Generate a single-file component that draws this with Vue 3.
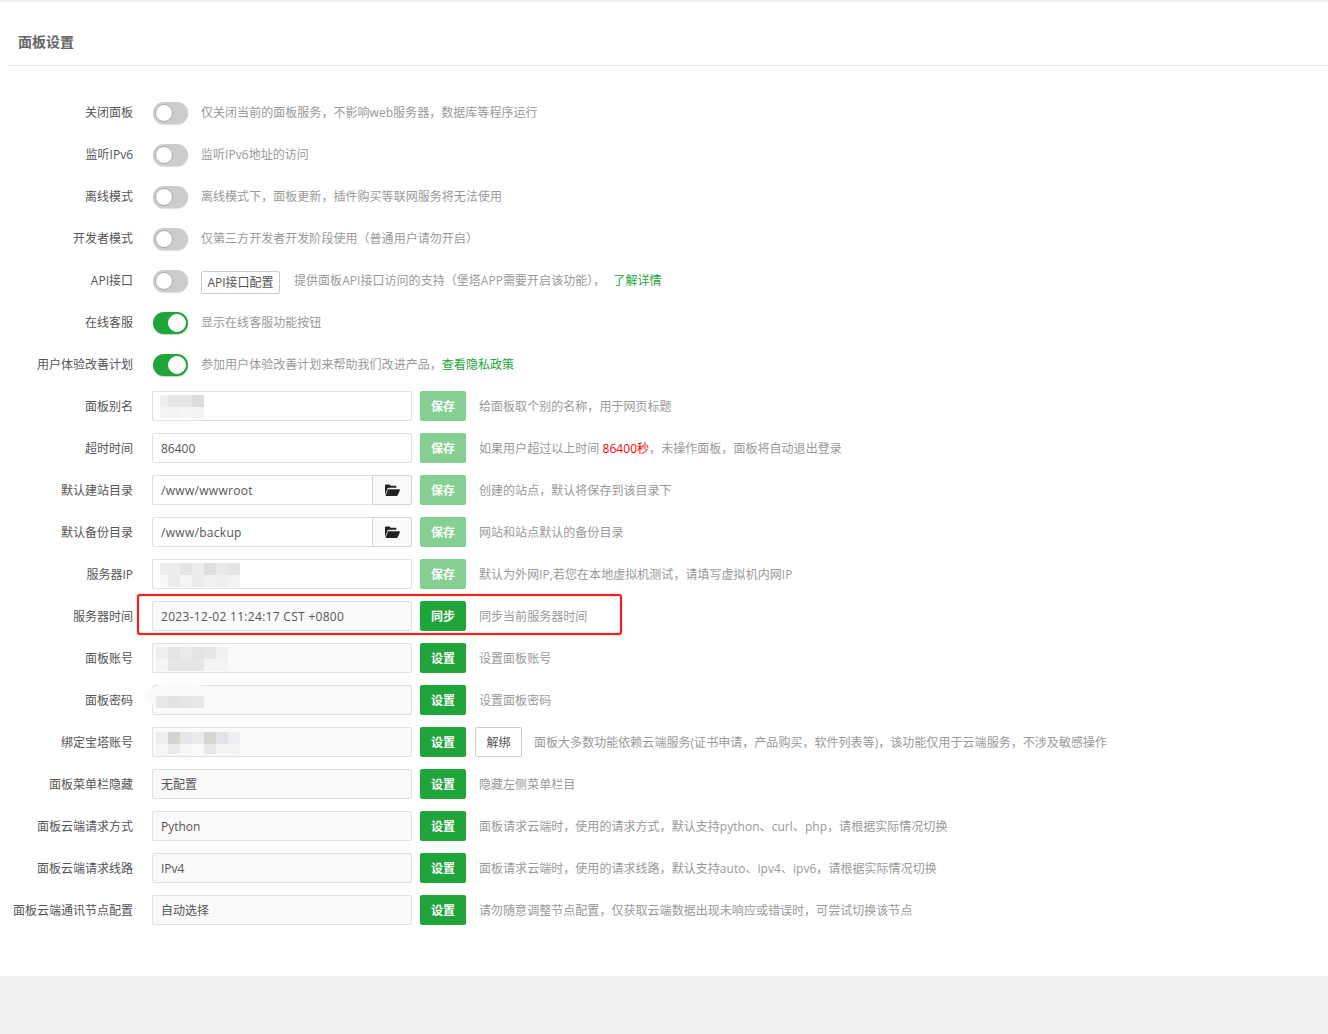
<script setup>
const toggles = [
  { label: '关闭面板', on: false, desc: '仅关闭当前的面板服务，不影响web服务器，数据库等程序运行' },
  { label: '监听IPv6', on: false, desc: '监听IPv6地址的访问' },
  { label: '离线模式', on: false, desc: '离线模式下，面板更新，插件购买等联网服务将无法使用' },
  { label: '开发者模式', on: false, desc: '仅第三方开发者开发阶段使用（普通用户请勿开启）' },
  { label: 'API接口', on: false, api: true, desc: '提供面板API接口访问的支持（堡塔APP需要开启该功能），', link: '了解详情' },
  { label: '在线客服', on: true, desc: '显示在线客服功能按钮' },
  { label: '用户体验改善计划', on: true, desc: '参加用户体验改善计划来帮助我们改进产品，', link: '查看隐私政策' }
]
const inputs = [
  { label: '面板别名', blur: 'a', btn: '保存', faded: true, white: true, desc: '给面板取个别的名称，用于网页标题' },
  { label: '超时时间', value: '86400', btn: '保存', faded: true, white: true, desc: '如果用户超过以上时间 ', red: '86400秒', after: '，未操作面板，面板将自动退出登录' },
  { label: '默认建站目录', value: '/www/wwwroot', folder: true, btn: '保存', faded: true, white: true, desc: '创建的站点，默认将保存到该目录下' },
  { label: '默认备份目录', value: '/www/backup', folder: true, btn: '保存', faded: true, white: true, desc: '网站和站点默认的备份目录' },
  { label: '服务器IP', blur: 'b', btn: '保存', faded: true, white: true, desc: '默认为外网IP,若您在本地虚拟机测试，请填写虚拟机内网IP' },
  { label: '服务器时间', value: '2023-12-02 11:24:17 CST +0800', btn: '同步', mark: true, desc: '同步当前服务器时间' },
  { label: '面板账号', blur: 'c', btn: '设置', desc: '设置面板账号' },
  { label: '面板密码', blur: 'd', btn: '设置', desc: '设置面板密码' },
  { label: '绑定宝塔账号', blur: 'e', btn: '设置', unbind: true, desc: '面板大多数功能依赖云端服务(证书申请，产品购买，软件列表等)，该功能仅用于云端服务，不涉及敏感操作' },
  { label: '面板菜单栏隐藏', value: '无配置', btn: '设置', desc: '隐藏左侧菜单栏目' },
  { label: '面板云端请求方式', value: 'Python', btn: '设置', desc: '面板请求云端时，使用的请求方式，默认支持python、curl、php，请根据实际情况切换' },
  { label: '面板云端请求线路', value: 'IPv4', btn: '设置', desc: '面板请求云端时，使用的请求线路，默认支持auto、ipv4、ipv6，请根据实际情况切换' },
  { label: '面板云端通讯节点配置', value: '自动选择', btn: '设置', desc: '请勿随意调整节点配置，仅获取云端数据出现未响应或错误时，可尝试切换该节点' }
]
const patches = {
  a: { cols: '8px repeat(3, 12px)', left: 7, top: 3, rows: '12px 11px', cells: ['eeeeee','e6e6e6','e6e6e6','dcdcdc','f4f4f4','f3f3f3','f5f5f5','f1f3f1'] },
  b: { cols: '8px repeat(6, 12px)', left: 7, top: 3, rows: '12px 12px', cells: ['eeecef','eeede9','e3e4e6','ededee','dddfe1','e9e9e5','e3e4e6','f8f8f8','ececec','f4f4f4','ebebeb','f0f1f0','efefef','f3f3f3'] },
  c: { cols: 'repeat(6, 12px)', left: 3, top: 3, rows: '12px 12px', cells: ['eeeeee','e4e4e4','ebebeb','e3e3e3','e6e6e6','f0f0f0','f4f4f4','e6e6e6','e6e6e6','e5e5e5','f3f3f3','f3f3f3'] },
  d: { cols: 'repeat(4, 12px)', left: 3, top: 10, rows: '12px', cells: ['e8e8e8','e2e2e2','e5e5e5','e8e8e8'] },
  e: { cols: 'repeat(7, 12px)', left: 3, top: 4, rows: '12px 10px', cells: ['eeeeee','d4d3d0','e5e6ea','eaeaea','d7d6d3','e2e3e6','edeef2','f6f6f6','ebebe7','f7f7f7','fbfbfb','e9e8e5','f3f3f3','f2f2f2'] }
}
const patchStyle = (key) => {
  const p = patches[key]
  return { gridTemplateColumns: p.cols, gridTemplateRows: p.rows, left: p.left + 'px', top: p.top + 'px' }
}
</script>

<template>
  <div class="page">
    <div class="panel">
      <h2 class="title">面板设置</h2>
      <div class="form">
        <div v-for="row in toggles" :key="row.label" class="row">
          <div class="label">{{ row.label }}</div>
          <span class="switch" :class="{ on: row.on }"><i class="knob"></i></span>
          <button v-if="row.api" class="api-btn" type="button">API接口配置</button>
          <div class="desc">{{ row.desc }}<a v-if="row.link" class="link" :class="{ gap: row.api }">{{ row.link }}</a></div>
        </div>
        <div v-for="row in inputs" :key="row.label" class="row">
          <div class="label">{{ row.label }}</div>
          <div class="field" :class="{ white: row.white }">
            <span class="value" :class="{ spaced: row.mark || row.folder }">{{ row.value }}</span>
            <span v-if="row.blur === 'd'" class="smudge"></span>
            <span v-if="row.blur" class="patch" :style="patchStyle(row.blur)">
              <i v-for="(c, i) in patches[row.blur].cells" :key="i" :style="{ background: '#' + c }"></i>
            </span>
            <span v-if="row.folder" class="folder">
              <svg width="15" height="12" viewBox="0 0 15 12"><path fill="#222" d="M0 11V1.600C0 .9.500.4 1.200.4h2.900c.6 0 1 .3 1.200.9l.2.500h4.700c.7 0 1.200.5 1.200 1.200v.8H4c-.8 0-1.400.4-1.700 1.100L0 11Z"/><path fill="#222" d="M3.100 5.200h10.900c.7 0 1.100.6.800 1.200l-2 4.700c-.2.500-.6.800-1.200.800H.6l2-6c.1-.4.300-.7.500-.7Z"/></svg>
            </span>
          </div>
          <button class="btn" :class="{ faded: row.faded }" type="button">{{ row.btn }}</button>
          <button v-if="row.unbind" class="unbind" type="button">解绑</button>
          <div class="desc">{{ row.desc }}<span v-if="row.red" class="red">{{ row.red }}</span>{{ row.after }}</div>
          <div v-if="row.mark" class="mark"></div>
        </div>
      </div>
    </div>
  </div>
</template>

<style>
html, body { margin: 0; background: #f0f0f0; }
</style>

<style scoped>
.page {
  height: 1034px;
  padding-top: 2px;
  box-sizing: border-box;
  font-family: "Open Sans", "Noto Sans CJK SC", sans-serif;
  font-size: 12px;
  color: #555;
}
.panel {
  background: #fff;
  height: 974px;
  padding-left: 8px;
  box-sizing: border-box;
}
.title {
  margin: 0;
  height: 63px;
  line-height: 79px;
  padding-left: 10px;
  font-size: 14px;
  font-weight: 700;
  color: #666;
  border-bottom: 1px solid #e6e6e6;
}
.form { padding-top: 31px; }
.row {
  position: relative;
  display: flex;
  align-items: center;
  height: 30px;
  margin-bottom: 12px;
}
.label {
  width: 125px;
  text-align: right;
  margin-right: 19px;
  white-space: nowrap;
  color: #555;
}
.switch {
  width: 35px;
  height: 22px;
  border-radius: 11px;
  background: #ccc;
  box-shadow: 0 1px 1px #ddd;
  position: relative;
  margin: 2px 13px 0 1px;
  flex: none;
}
.switch.on { background: #20a53a; box-shadow: 0 1px 1px #ccc; }
.knob {
  position: absolute;
  left: 2px;
  top: 2px;
  width: 18px;
  height: 18px;
  box-sizing: border-box;
  border-radius: 50%;
  background: #fff;
  border: 1px solid #aaa;
}
.switch.on .knob { left: 15px; border-color: #fff; }
.api-btn {
  height: 23px;
  width: 79px;
  padding: 0;
  margin: 4px 14px 0 0;
  background: #fff;
  border: 1px solid #ccc;
  border-radius: 2px;
  font: inherit;
  color: #555;
}
.desc { color: #999; white-space: nowrap; letter-spacing: .04px; }
.link { color: #20a53a; }
.link.gap { margin-left: 8px; }
.red { color: #f00; }
.field {
  width: 260px;
  height: 30px;
  box-sizing: border-box;
  border: 1px solid #e0e0e8;
  border-radius: 2px;
  background: #fafafa;
  display: flex;
  align-items: center;
  padding-left: 8px;
  position: relative;
  margin-right: 8px;
  flex: none;
  color: #555;
}
.field.white { background: #fff; }
.value { flex: 1; white-space: nowrap; }
.value.spaced { letter-spacing: .3px; }
.patch {
  position: absolute;
  display: grid;
}
.smudge {
  position: absolute;
  left: -8px;
  top: -3px;
  width: 65px;
  height: 26px;
  border-radius: 50% 40% 0 50%;
  background: #f9faf9;
}
.folder {
  position: absolute;
  right: -1px;
  top: -1px;
  bottom: -1px;
  width: 40px;
  box-sizing: border-box;
  background: #fafafa;
  border: 1px solid #d4d4d4;
  border-radius: 0 2px 2px 0;
  display: flex;
  align-items: center;
  justify-content: center;
}
.btn {
  width: 46px;
  height: 30px;
  padding: 0;
  border: 0;
  border-radius: 2px;
  background: #20a53a;
  color: #fff;
  font: inherit;
  font-weight: 700;
  margin-right: 13px;
  flex: none;
}
.btn.faded { background: #86cf92; }
.unbind {
  width: 47px;
  height: 30px;
  padding: 0;
  background: #fff;
  border: 1px solid #ccc;
  border-radius: 2px;
  font: inherit;
  color: #555;
  margin-left: -4px;
  margin-right: 12px;
  flex: none;
}
.mark {
  position: absolute;
  left: 129px;
  top: -7px;
  width: 485px;
  height: 41px;
  box-sizing: border-box;
  border: 2px solid #fa1e1e;
  border-radius: 3px;
  box-shadow: 0 0 1px #fa1e1e, inset 0 0 1px #fa1e1e;
  pointer-events: none;
}
</style>
